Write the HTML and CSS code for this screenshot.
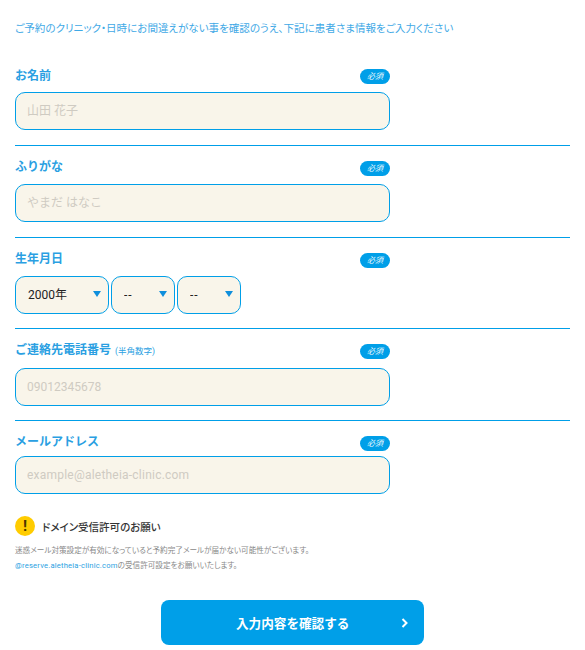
FILE: index.html
```html
<!DOCTYPE html>
<html lang="ja">
<head>
<meta charset="UTF-8">
<meta name="viewport" content="width=device-width, initial-scale=1.0">
<title>ご予約</title>
<link rel="stylesheet" href="styles.css">
</head>
<body>
<div id="form">
    <p class="lead">ご予約のクリニック・日時にお間違えがない事を確認のうえ、下記に患者さま情報をご入力ください</p>

    <div class="field first">
        <div class="field-head">
            <label for="name">お名前</label>
            <span class="req">必須</span>
        </div>
        <input type="text" id="name" class="text" placeholder="山田 花子">
    </div>

    <div class="field">
        <div class="field-head">
            <label for="kana">ふりがな</label>
            <span class="req">必須</span>
        </div>
        <input type="text" id="kana" class="text" placeholder="やまだ はなこ">
    </div>

    <div class="field birth-field">
        <div class="field-head">
            <label for="year">生年月日</label>
            <span class="req">必須</span>
        </div>
        <div class="birth">
            <div class="select year"><select id="year"><option>2000年</option></select></div>
            <div class="select"><select id="month" class="dash"><option>--</option></select></div>
            <div class="select"><select id="day" class="dash"><option>--</option></select></div>
        </div>
    </div>

    <div class="field tel-field">
        <div class="field-head">
            <label for="tel">ご連絡先電話番号<small>(半角数字)</small></label>
            <span class="req">必須</span>
        </div>
        <input type="text" id="tel" class="text" placeholder="09012345678">
    </div>

    <div class="field mail-field">
        <div class="field-head">
            <label for="mail">メールアドレス</label>
            <span class="req">必須</span>
        </div>
        <input type="text" id="mail" class="text" placeholder="example@aletheia-clinic.com">
    </div>

    <div class="notice">
        <div class="notice-head">
            <span class="mark">!</span>
            <span>ドメイン受信許可のお願い</span>
        </div>
        <p>迷惑メール対策設定が有効になっていると予約完了メールが届かない可能性がございます。<br><a href="#">@reserve.aletheia-clinic.com</a>の受信許可設定をお願いいたします。</p>
    </div>

    <button type="button" class="submit">
        <span>入力内容を確認する</span>
        <svg class="chev" width="8" height="10" viewBox="0 0 8 10"><path d="M1.5 1 L5.5 5 L1.5 9" fill="none" stroke="#fff" stroke-width="2"/></svg>
    </button>
</div>
</body>
</html>
```

FILE: styles.css
```css
* {
    box-sizing: border-box;
}
body {
    font-family: Roboto, "Noto Sans CJK JP", sans-serif;
    margin: 0;
    padding: 0;
    background-color: #fff;
    color: #333;
}
#form {
    padding: 0 15px;
    height: 650px;
    overflow: hidden;
}
.lead {
    margin: 0;
    padding-top: 21px;
    font-size: 10.54px;
    font-feature-settings: "palt";
    line-height: 15px;
    color: #3fa9e6;
    white-space: nowrap;
}
.field {
    width: 555px;
    height: 92px;
    padding-top: 12px;
    border-top: 1px solid #009fe8;
}
.field.first {
    height: 109px;
    padding-top: 30px;
    border-top: 0;
}
.birth-field {
    height: 91px;
}
.field-head {
    display: flex;
    justify-content: space-between;
    align-items: flex-start;
    width: 375px;
    height: 26px;
}
.tel-field .field-head {
    height: 27px;
}
.mail-field .field-head {
    height: 23px;
}
.first label {
    margin-top: 1px;
}
label {
    font-size: 12px;
    font-weight: 700;
    line-height: 18px;
    color: #2a9fe2;
}
label small {
    font-size: 8.5px;
    font-weight: 400;
    margin-left: 4px;
}
.req {
    width: 30px;
    height: 15px;
    margin-top: 3px;
    border-radius: 8px;
    background-color: #009fe8;
    color: #fff;
    font-size: 8px;
    font-style: italic;
    line-height: 15px;
    text-align: center;
}
.text {
    display: block;
    width: 375px;
    height: 37.6px;
    padding: 0 11px;
    border: 1px solid #009fe8;
    border-radius: 10px;
    background-color: #f9f5ea;
    font-family: inherit;
    font-size: 12px;
}
.text::placeholder {
    color: #cfcbc2;
}
#mail::placeholder {
    letter-spacing: 0.22px;
}
.birth {
    display: flex;
    gap: 2px;
}
.select {
    position: relative;
    width: 64px;
    height: 37.6px;
}
.select.year {
    width: 94px;
}
.select::after {
    content: "";
    position: absolute;
    top: 15px;
    right: 8px;
    border-style: solid;
    border-width: 6px 4px 0;
    border-color: #0f8fdc transparent transparent;
}
select {
    appearance: none;
    width: 100%;
    height: 100%;
    padding: 0 12px;
    border: 1px solid #009fe8;
    border-radius: 10px;
    background-color: #f9f5ea;
    font-family: inherit;
    font-size: 12px;
    color: #222;
}
select.dash {
    letter-spacing: 1px;
}
.notice {
    padding-top: 4px;
}
.notice-head {
    display: flex;
    align-items: center;
    gap: 7px;
    height: 20px;
    font-size: 10.5px;
    font-feature-settings: "palt";
    font-weight: 500;
    color: #333;
}
.mark {
    width: 20px;
    height: 20px;
    border-radius: 50%;
    background-color: #ffcc00;
    color: #4a3500;
    font-size: 15px;
    font-weight: 700;
    line-height: 20px;
    text-align: center;
}
.notice p {
    margin: 7px 0 0;
    font-size: 7.6px;
    font-feature-settings: "palt";
    line-height: 15px;
    color: #888;
    white-space: nowrap;
}
.notice a {
    color: #2a9fe2;
    letter-spacing: 0.2px;
    text-decoration: none;
}
.submit {
    display: flex;
    align-items: center;
    width: 263px;
    height: 45px;
    margin: 27px 0 0 146px;
    padding: 0 15px 0 75px;
    border: none;
    border-radius: 8px;
    background-color: #009fe8;
    color: #fff;
    font-family: inherit;
    font-size: 12.6px;
    font-weight: 700;
}
.chev {
    margin-left: auto;
}
```
